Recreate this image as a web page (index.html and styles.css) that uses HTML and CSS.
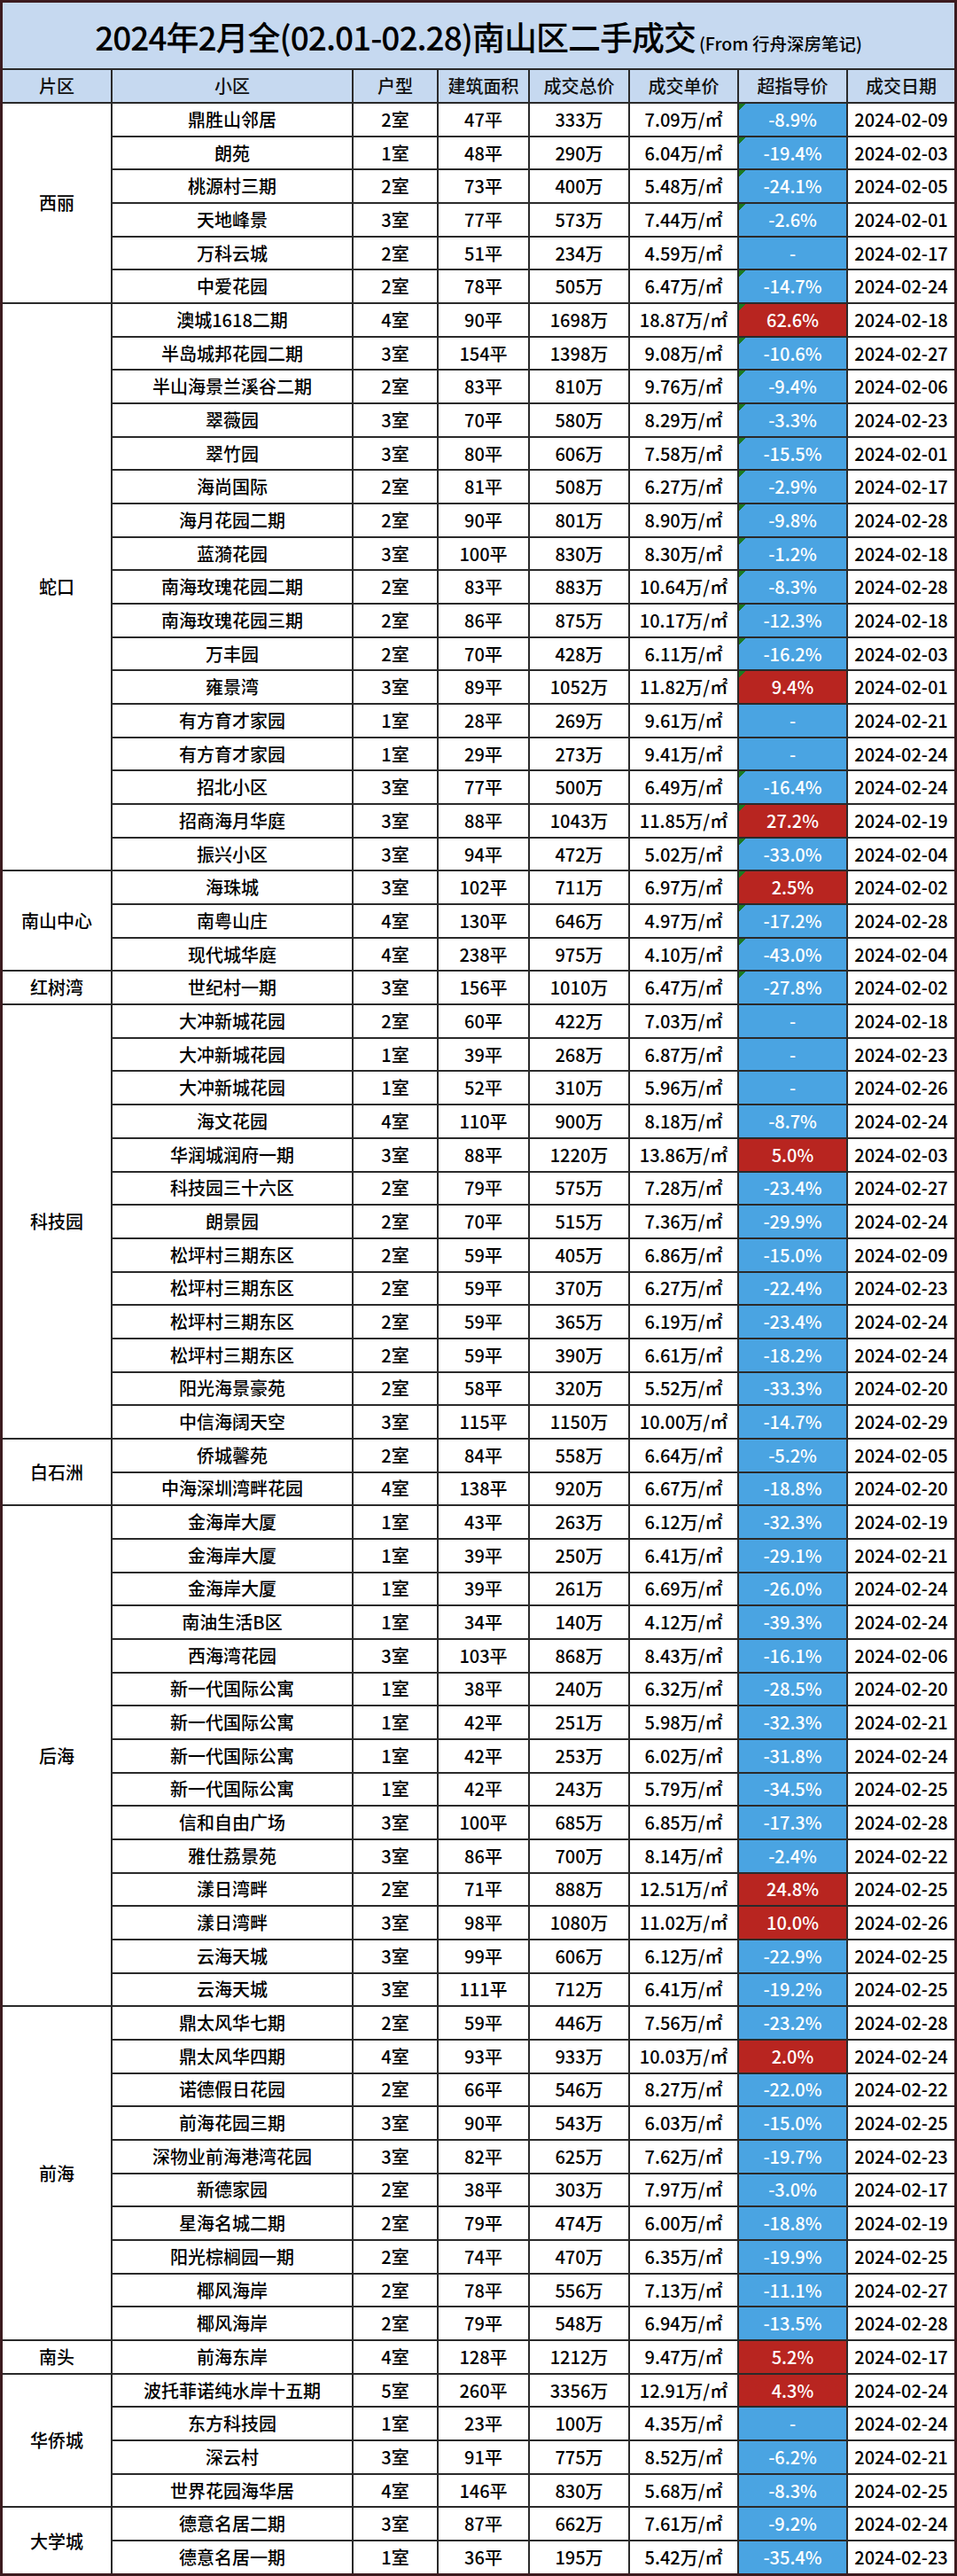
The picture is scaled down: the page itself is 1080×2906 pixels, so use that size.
FILE: index.html
```html
<!DOCTYPE html>
<html lang="zh-CN">
<head>
<meta charset="utf-8">
<title>2024年2月南山区二手成交</title>
<link rel="stylesheet" href="styles.css">
</head>
<body>
<div class="frame">
<table class="sheet">
<colgroup>
<col class="c1"><col class="c2"><col class="c3"><col class="c4"><col class="c5"><col class="c6"><col class="c7"><col class="c8">
</colgroup>
<thead>
<tr class="title"><th colspan="8"><span class="t-main">2024年2月全(02.01-02.28)南山区二手成交</span><span class="t-sub">(From 行舟深房笔记)</span></th></tr>
<tr class="head"><th>片区</th><th>小区</th><th>户型</th><th>建筑面积</th><th>成交总价</th><th>成交单价</th><th>超指导价</th><th>成交日期</th></tr>
</thead>
<tbody>
<tr class="d"><td class="grp" rowspan="6">西丽</td><td>鼎胜山邻居</td><td>2室</td><td>47平</td><td>333万</td><td>7.09万/㎡</td><td class="neg tri">-8.9%</td><td>2024-02-09</td></tr>
<tr class="d"><td>朗苑</td><td>1室</td><td>48平</td><td>290万</td><td>6.04万/㎡</td><td class="neg tri">-19.4%</td><td>2024-02-03</td></tr>
<tr class="d"><td>桃源村三期</td><td>2室</td><td>73平</td><td>400万</td><td>5.48万/㎡</td><td class="neg tri">-24.1%</td><td>2024-02-05</td></tr>
<tr class="d"><td>天地峰景</td><td>3室</td><td>77平</td><td>573万</td><td>7.44万/㎡</td><td class="neg tri">-2.6%</td><td>2024-02-01</td></tr>
<tr class="d"><td>万科云城</td><td>2室</td><td>51平</td><td>234万</td><td>4.59万/㎡</td><td class="neg">-</td><td>2024-02-17</td></tr>
<tr class="d"><td>中爱花园</td><td>2室</td><td>78平</td><td>505万</td><td>6.47万/㎡</td><td class="neg tri">-14.7%</td><td>2024-02-24</td></tr>

<tr class="d"><td class="grp" rowspan="17">蛇口</td><td>澳城1618二期</td><td>4室</td><td>90平</td><td>1698万</td><td>18.87万/㎡</td><td class="pos tri">62.6%</td><td>2024-02-18</td></tr>
<tr class="d"><td>半岛城邦花园二期</td><td>3室</td><td>154平</td><td>1398万</td><td>9.08万/㎡</td><td class="neg tri">-10.6%</td><td>2024-02-27</td></tr>
<tr class="d"><td>半山海景兰溪谷二期</td><td>2室</td><td>83平</td><td>810万</td><td>9.76万/㎡</td><td class="neg tri">-9.4%</td><td>2024-02-06</td></tr>
<tr class="d"><td>翠薇园</td><td>3室</td><td>70平</td><td>580万</td><td>8.29万/㎡</td><td class="neg tri">-3.3%</td><td>2024-02-23</td></tr>
<tr class="d"><td>翠竹园</td><td>3室</td><td>80平</td><td>606万</td><td>7.58万/㎡</td><td class="neg tri">-15.5%</td><td>2024-02-01</td></tr>
<tr class="d"><td>海尚国际</td><td>2室</td><td>81平</td><td>508万</td><td>6.27万/㎡</td><td class="neg tri">-2.9%</td><td>2024-02-17</td></tr>
<tr class="d"><td>海月花园二期</td><td>2室</td><td>90平</td><td>801万</td><td>8.90万/㎡</td><td class="neg tri">-9.8%</td><td>2024-02-28</td></tr>
<tr class="d"><td>蓝漪花园</td><td>3室</td><td>100平</td><td>830万</td><td>8.30万/㎡</td><td class="neg tri">-1.2%</td><td>2024-02-18</td></tr>
<tr class="d"><td>南海玫瑰花园二期</td><td>2室</td><td>83平</td><td>883万</td><td>10.64万/㎡</td><td class="neg tri">-8.3%</td><td>2024-02-28</td></tr>
<tr class="d"><td>南海玫瑰花园三期</td><td>2室</td><td>86平</td><td>875万</td><td>10.17万/㎡</td><td class="neg tri">-12.3%</td><td>2024-02-18</td></tr>
<tr class="d"><td>万丰园</td><td>2室</td><td>70平</td><td>428万</td><td>6.11万/㎡</td><td class="neg tri">-16.2%</td><td>2024-02-03</td></tr>
<tr class="d"><td>雍景湾</td><td>3室</td><td>89平</td><td>1052万</td><td>11.82万/㎡</td><td class="pos tri">9.4%</td><td>2024-02-01</td></tr>
<tr class="d"><td>有方育才家园</td><td>1室</td><td>28平</td><td>269万</td><td>9.61万/㎡</td><td class="neg">-</td><td>2024-02-21</td></tr>
<tr class="d"><td>有方育才家园</td><td>1室</td><td>29平</td><td>273万</td><td>9.41万/㎡</td><td class="neg">-</td><td>2024-02-24</td></tr>
<tr class="d"><td>招北小区</td><td>3室</td><td>77平</td><td>500万</td><td>6.49万/㎡</td><td class="neg tri">-16.4%</td><td>2024-02-24</td></tr>
<tr class="d"><td>招商海月华庭</td><td>3室</td><td>88平</td><td>1043万</td><td>11.85万/㎡</td><td class="pos tri">27.2%</td><td>2024-02-19</td></tr>
<tr class="d"><td>振兴小区</td><td>3室</td><td>94平</td><td>472万</td><td>5.02万/㎡</td><td class="neg tri">-33.0%</td><td>2024-02-04</td></tr>

<tr class="d"><td class="grp" rowspan="3">南山中心</td><td>海珠城</td><td>3室</td><td>102平</td><td>711万</td><td>6.97万/㎡</td><td class="pos tri">2.5%</td><td>2024-02-02</td></tr>
<tr class="d"><td>南粤山庄</td><td>4室</td><td>130平</td><td>646万</td><td>4.97万/㎡</td><td class="neg tri">-17.2%</td><td>2024-02-28</td></tr>
<tr class="d"><td>现代城华庭</td><td>4室</td><td>238平</td><td>975万</td><td>4.10万/㎡</td><td class="neg tri">-43.0%</td><td>2024-02-04</td></tr>

<tr class="d"><td class="grp">红树湾</td><td>世纪村一期</td><td>3室</td><td>156平</td><td>1010万</td><td>6.47万/㎡</td><td class="neg tri">-27.8%</td><td>2024-02-02</td></tr>

<tr class="d"><td class="grp" rowspan="13">科技园</td><td>大冲新城花园</td><td>2室</td><td>60平</td><td>422万</td><td>7.03万/㎡</td><td class="neg">-</td><td>2024-02-18</td></tr>
<tr class="d"><td>大冲新城花园</td><td>1室</td><td>39平</td><td>268万</td><td>6.87万/㎡</td><td class="neg">-</td><td>2024-02-23</td></tr>
<tr class="d"><td>大冲新城花园</td><td>1室</td><td>52平</td><td>310万</td><td>5.96万/㎡</td><td class="neg">-</td><td>2024-02-26</td></tr>
<tr class="d"><td>海文花园</td><td>4室</td><td>110平</td><td>900万</td><td>8.18万/㎡</td><td class="neg">-8.7%</td><td>2024-02-24</td></tr>
<tr class="d"><td>华润城润府一期</td><td>3室</td><td>88平</td><td>1220万</td><td>13.86万/㎡</td><td class="pos">5.0%</td><td>2024-02-03</td></tr>
<tr class="d"><td>科技园三十六区</td><td>2室</td><td>79平</td><td>575万</td><td>7.28万/㎡</td><td class="neg">-23.4%</td><td>2024-02-27</td></tr>
<tr class="d"><td>朗景园</td><td>2室</td><td>70平</td><td>515万</td><td>7.36万/㎡</td><td class="neg">-29.9%</td><td>2024-02-24</td></tr>
<tr class="d"><td>松坪村三期东区</td><td>2室</td><td>59平</td><td>405万</td><td>6.86万/㎡</td><td class="neg">-15.0%</td><td>2024-02-09</td></tr>
<tr class="d"><td>松坪村三期东区</td><td>2室</td><td>59平</td><td>370万</td><td>6.27万/㎡</td><td class="neg">-22.4%</td><td>2024-02-23</td></tr>
<tr class="d"><td>松坪村三期东区</td><td>2室</td><td>59平</td><td>365万</td><td>6.19万/㎡</td><td class="neg">-23.4%</td><td>2024-02-24</td></tr>
<tr class="d"><td>松坪村三期东区</td><td>2室</td><td>59平</td><td>390万</td><td>6.61万/㎡</td><td class="neg">-18.2%</td><td>2024-02-24</td></tr>
<tr class="d"><td>阳光海景豪苑</td><td>2室</td><td>58平</td><td>320万</td><td>5.52万/㎡</td><td class="neg">-33.3%</td><td>2024-02-20</td></tr>
<tr class="d"><td>中信海阔天空</td><td>3室</td><td>115平</td><td>1150万</td><td>10.00万/㎡</td><td class="neg">-14.7%</td><td>2024-02-29</td></tr>

<tr class="d"><td class="grp" rowspan="2">白石洲</td><td>侨城馨苑</td><td>2室</td><td>84平</td><td>558万</td><td>6.64万/㎡</td><td class="neg">-5.2%</td><td>2024-02-05</td></tr>
<tr class="d"><td>中海深圳湾畔花园</td><td>4室</td><td>138平</td><td>920万</td><td>6.67万/㎡</td><td class="neg">-18.8%</td><td>2024-02-20</td></tr>

<tr class="d"><td class="grp" rowspan="15">后海</td><td>金海岸大厦</td><td>1室</td><td>43平</td><td>263万</td><td>6.12万/㎡</td><td class="neg">-32.3%</td><td>2024-02-19</td></tr>
<tr class="d"><td>金海岸大厦</td><td>1室</td><td>39平</td><td>250万</td><td>6.41万/㎡</td><td class="neg">-29.1%</td><td>2024-02-21</td></tr>
<tr class="d"><td>金海岸大厦</td><td>1室</td><td>39平</td><td>261万</td><td>6.69万/㎡</td><td class="neg">-26.0%</td><td>2024-02-24</td></tr>
<tr class="d"><td>南油生活B区</td><td>1室</td><td>34平</td><td>140万</td><td>4.12万/㎡</td><td class="neg">-39.3%</td><td>2024-02-24</td></tr>
<tr class="d"><td>西海湾花园</td><td>3室</td><td>103平</td><td>868万</td><td>8.43万/㎡</td><td class="neg">-16.1%</td><td>2024-02-06</td></tr>
<tr class="d"><td>新一代国际公寓</td><td>1室</td><td>38平</td><td>240万</td><td>6.32万/㎡</td><td class="neg">-28.5%</td><td>2024-02-20</td></tr>
<tr class="d"><td>新一代国际公寓</td><td>1室</td><td>42平</td><td>251万</td><td>5.98万/㎡</td><td class="neg">-32.3%</td><td>2024-02-21</td></tr>
<tr class="d"><td>新一代国际公寓</td><td>1室</td><td>42平</td><td>253万</td><td>6.02万/㎡</td><td class="neg">-31.8%</td><td>2024-02-24</td></tr>
<tr class="d"><td>新一代国际公寓</td><td>1室</td><td>42平</td><td>243万</td><td>5.79万/㎡</td><td class="neg">-34.5%</td><td>2024-02-25</td></tr>
<tr class="d"><td>信和自由广场</td><td>3室</td><td>100平</td><td>685万</td><td>6.85万/㎡</td><td class="neg">-17.3%</td><td>2024-02-28</td></tr>
<tr class="d"><td>雅仕荔景苑</td><td>3室</td><td>86平</td><td>700万</td><td>8.14万/㎡</td><td class="neg">-2.4%</td><td>2024-02-22</td></tr>
<tr class="d"><td>漾日湾畔</td><td>2室</td><td>71平</td><td>888万</td><td>12.51万/㎡</td><td class="pos">24.8%</td><td>2024-02-25</td></tr>
<tr class="d"><td>漾日湾畔</td><td>3室</td><td>98平</td><td>1080万</td><td>11.02万/㎡</td><td class="pos">10.0%</td><td>2024-02-26</td></tr>
<tr class="d"><td>云海天城</td><td>3室</td><td>99平</td><td>606万</td><td>6.12万/㎡</td><td class="neg">-22.9%</td><td>2024-02-25</td></tr>
<tr class="d"><td>云海天城</td><td>3室</td><td>111平</td><td>712万</td><td>6.41万/㎡</td><td class="neg">-19.2%</td><td>2024-02-25</td></tr>

<tr class="d"><td class="grp" rowspan="10">前海</td><td>鼎太风华七期</td><td>2室</td><td>59平</td><td>446万</td><td>7.56万/㎡</td><td class="neg">-23.2%</td><td>2024-02-28</td></tr>
<tr class="d"><td>鼎太风华四期</td><td>4室</td><td>93平</td><td>933万</td><td>10.03万/㎡</td><td class="pos">2.0%</td><td>2024-02-24</td></tr>
<tr class="d"><td>诺德假日花园</td><td>2室</td><td>66平</td><td>546万</td><td>8.27万/㎡</td><td class="neg">-22.0%</td><td>2024-02-22</td></tr>
<tr class="d"><td>前海花园三期</td><td>3室</td><td>90平</td><td>543万</td><td>6.03万/㎡</td><td class="neg">-15.0%</td><td>2024-02-25</td></tr>
<tr class="d"><td>深物业前海港湾花园</td><td>3室</td><td>82平</td><td>625万</td><td>7.62万/㎡</td><td class="neg">-19.7%</td><td>2024-02-23</td></tr>
<tr class="d"><td>新德家园</td><td>2室</td><td>38平</td><td>303万</td><td>7.97万/㎡</td><td class="neg">-3.0%</td><td>2024-02-17</td></tr>
<tr class="d"><td>星海名城二期</td><td>2室</td><td>79平</td><td>474万</td><td>6.00万/㎡</td><td class="neg">-18.8%</td><td>2024-02-19</td></tr>
<tr class="d"><td>阳光棕榈园一期</td><td>2室</td><td>74平</td><td>470万</td><td>6.35万/㎡</td><td class="neg">-19.9%</td><td>2024-02-25</td></tr>
<tr class="d"><td>椰风海岸</td><td>2室</td><td>78平</td><td>556万</td><td>7.13万/㎡</td><td class="neg">-11.1%</td><td>2024-02-27</td></tr>
<tr class="d"><td>椰风海岸</td><td>2室</td><td>79平</td><td>548万</td><td>6.94万/㎡</td><td class="neg">-13.5%</td><td>2024-02-28</td></tr>

<tr class="d"><td class="grp">南头</td><td>前海东岸</td><td>4室</td><td>128平</td><td>1212万</td><td>9.47万/㎡</td><td class="pos">5.2%</td><td>2024-02-17</td></tr>

<tr class="d"><td class="grp" rowspan="4">华侨城</td><td>波托菲诺纯水岸十五期</td><td>5室</td><td>260平</td><td>3356万</td><td>12.91万/㎡</td><td class="pos">4.3%</td><td>2024-02-24</td></tr>
<tr class="d"><td>东方科技园</td><td>1室</td><td>23平</td><td>100万</td><td>4.35万/㎡</td><td class="neg">-</td><td>2024-02-24</td></tr>
<tr class="d"><td>深云村</td><td>3室</td><td>91平</td><td>775万</td><td>8.52万/㎡</td><td class="neg">-6.2%</td><td>2024-02-21</td></tr>
<tr class="d"><td>世界花园海华居</td><td>4室</td><td>146平</td><td>830万</td><td>5.68万/㎡</td><td class="neg">-8.3%</td><td>2024-02-25</td></tr>

<tr class="d"><td class="grp" rowspan="2">大学城</td><td>德意名居二期</td><td>3室</td><td>87平</td><td>662万</td><td>7.61万/㎡</td><td class="neg">-9.2%</td><td>2024-02-24</td></tr>
<tr class="d"><td>德意名居一期</td><td>1室</td><td>36平</td><td>195万</td><td>5.42万/㎡</td><td class="neg">-35.4%</td><td>2024-02-23</td></tr>
</tbody>
</table>
</div>
</body>
</html>
```

FILE: styles.css
```css
html, body {
  margin: 0;
  padding: 0;
  background: #ffffff;
}

.frame {
  box-sizing: border-box;
  width: 1080px;
  height: 2906px;
  border: 3px solid #3c1b1f;
  background: #ffffff;
  overflow: hidden;
}

.sheet {
  width: 1074px;
  table-layout: fixed;
  border-collapse: collapse;
  border-style: hidden;
  font-family: "Noto Sans CJK SC", "Noto Sans", sans-serif;
  font-size: 20px;
  font-weight: 500;
  color: #000000;
}

.c1 { width: 123px; }
.c2 { width: 272px; }
.c3 { width: 96px; }
.c4 { width: 103px; }
.c5 { width: 113px; }
.c6 { width: 123px; }
.c7 { width: 123px; }
.c8 { width: 121px; }

.sheet th,
.sheet td {
  border: 2px solid #2a2a2a;
  padding: 0;
  text-align: center;
  vertical-align: middle;
  white-space: nowrap;
  line-height: 1;
  overflow: hidden;
}

.title { height: 75px; }
.title th {
  background: #c6d9f0;
  font-weight: 500;
  color: #000000;
  padding-top: 2px;
}
.t-main {
  font-size: 37px;
  letter-spacing: -1px;
}
.t-sub {
  font-size: 19.5px;
  margin-left: 4px;
}

.head { height: 38px; }
.head th {
  background: #c6d9f0;
  font-weight: 500;
  color: #111111;
}

.d { height: 37.68px; }

.grp {
  background: #ffffff;
}

.neg {
  background-color: #4aa4e2;
  color: #ffffff;
}
.pos {
  background-color: #b82520;
  color: #ffffff;
}
.tri {
  background-image: linear-gradient(135deg, #1c7a22 0, #1c7a22 5.5px, transparent 5.5px);
}
```
